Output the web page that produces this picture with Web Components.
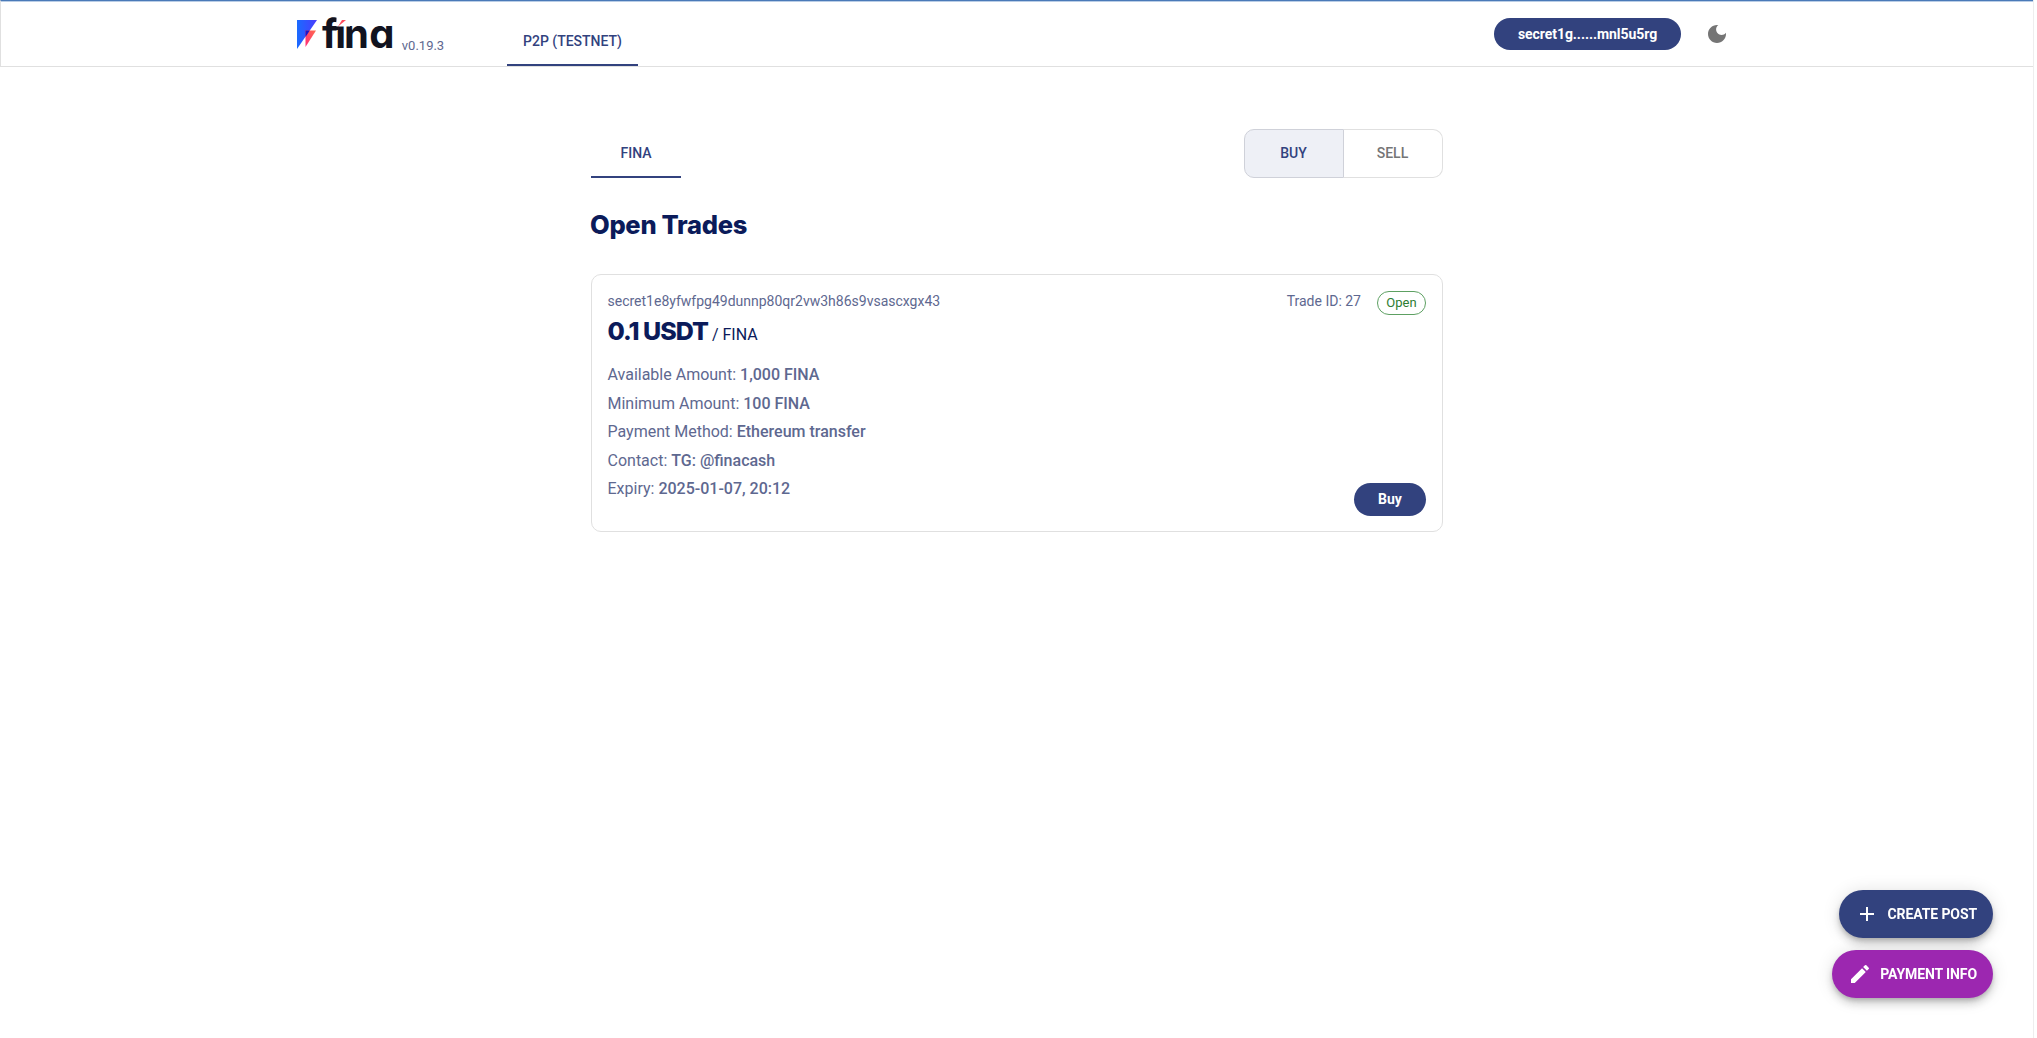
<!DOCTYPE html>
<html lang="en">
<head>
<meta charset="utf-8">
<title>fina P2P</title>
<style>
  html, body { margin: 0; padding: 0; background: #fff; height: 100%; }
  body { font-family: Roboto, "Liberation Sans", sans-serif; overflow: hidden; }
  #page { box-sizing: border-box; width: 2034px; height: 1038px; border-right: 1px solid #eeeeee; }
</style>
</head>
<body>
<div id="page">
  <fina-header version="v0.19.3" tab="P2P (TESTNET)" wallet="secret1g......mnl5u5rg"></fina-header>
  <trade-page>
    <trade-card
      owner="secret1e8yfwfpg49dunnp80qr2vw3h86s9vsascxgx43"
      trade-id="27"
      price="0.1 USDT"
      token="FINA"
      available="1,000 FINA"
      minimum="100 FINA"
      method="Ethereum transfer"
      contact="TG: @finacash"
      expiry="2025-01-07, 20:12"></trade-card>
  </trade-page>
</div>
<fab-stack></fab-stack>

<script>
class FinaHeader extends HTMLElement {
  constructor() {
    super();
    this.attachShadow({ mode: "open" });
  }

  connectedCallback() {
    const version = this.getAttribute("version") || "";
    const tab = this.getAttribute("tab") || "";
    const wallet = this.getAttribute("wallet") || "";

    this.shadowRoot.innerHTML = `
      <style>
        :host {
          display: flex;
          align-items: stretch;
          box-sizing: border-box;
          height: 67px;
          padding: 1px 304px 0 296px;
          background: #fff;
          border-top: 1px solid #4a7ab8;
          border-left: 1px solid #e0e0e0;
          border-bottom: 1px solid #e0e0e0;
          box-shadow: inset 0 1px 0 #b9cde6;
        }
        .logo { display: flex; align-items: flex-start; width: 210px; }
        .logo > svg { margin-top: 18px; flex: none; }
        .word {
          position: relative;
          margin: 10px 0 0 5px;
          font: 700 40px/44px Inter, sans-serif;
          font-feature-settings: "cv11";
          letter-spacing: 0.4px;
          color: #11131f;
        }
        .word .f { letter-spacing: -2.6px; }
        .word .i { letter-spacing: -2.3px; }
        .accent { position: absolute; left: 14px; top: 3px; }
        .version { margin: 35px 0 0 7px; font-size: 13px; line-height: 18px; color: #5e6890; }
        .tab {
          display: flex;
          align-items: center;
          box-sizing: border-box;
          padding: 15px 16px 0;
          height: 64px;
          font-size: 14px;
          font-weight: 500;
          color: #32427e;
          border-bottom: 2px solid #32427e;
        }
        .spacer { flex: 1; }
        .wallet {
          align-self: flex-start;
          margin-top: 16px;
          box-sizing: border-box;
          width: 187px;
          height: 32px;
          border-radius: 16px;
          background: #32427e;
          color: #fff;
          font-size: 14px;
          font-weight: 700;
          letter-spacing: -0.05px;
          line-height: 32px;
          text-align: center;
        }
        .moon { align-self: flex-start; margin: 20px 0 0 24px; }
      </style>
      <div class="logo">
        <svg width="20" height="29" viewBox="0 0 20 29">
          <defs>
            <linearGradient id="blue" x1="0" y1="0" x2="1" y2="0">
              <stop offset="0" stop-color="#1a6bff"/><stop offset="1" stop-color="#4a3cff"/>
            </linearGradient>
            <linearGradient id="red" x1="0" y1="1" x2="1" y2="0">
              <stop offset="0" stop-color="#ff2d7a"/><stop offset="1" stop-color="#ff6a4d"/>
            </linearGradient>
          </defs>
          <path d="M0 0H20L0 29Z" fill="url(#blue)"/>
          <path d="M8.500 10.500H19L8.500 27Z" fill="url(#red)"/>
          <path d="M8.500 10.500H12.800L8.500 17Z" fill="#1a14c8"/>
        </svg>
        <span class="word"><span class="f">f</span><span class="i">i</span>na<svg class="accent" width="14" height="16" viewBox="0 0 14 16"><rect x="0.500" y="0" width="13.500" height="11.500" fill="#fff"/><rect x="0" y="11.500" width="2.500" height="3.500" fill="#11131f"/><path d="M6 5H10L2 11.500Z" fill="#ff4d5e"/></svg></span>
        <span class="version">${version}</span>
      </div>
      <div class="tab">${tab}</div>
      <div class="spacer"></div>
      <div class="wallet">${wallet}</div>
      <svg class="moon" width="24" height="24" viewBox="0 0 24 24" fill="#757575">
        <path d="M12 3c-4.970 0-9 4.030-9 9s4.030 9 9 9 9-4.030 9-9c0-.460-.040-.920-.100-1.360-.980 1.370-2.580 2.260-4.400 2.260-2.980 0-5.400-2.420-5.400-5.400 0-1.810.890-3.420 2.260-4.400-.440-.060-.900-.100-1.360-.100z"/>
      </svg>
    `;
  }
}

class TradePage extends HTMLElement {
  constructor() {
    super();
    this.attachShadow({ mode: "open" });
  }

  connectedCallback() {
    this.shadowRoot.innerHTML = `
      <style>
        :host { display: block; box-sizing: border-box; width: 852px; margin: 62px 0 0 591px; }
        .top { display: flex; justify-content: space-between; align-items: flex-end; height: 49px; }
        .tab {
          box-sizing: border-box;
          width: 90px;
          height: 48px;
          padding-top: 13px;
          text-align: center;
          font: 500 14px/20px Roboto, sans-serif;
          color: #32427e;
          border-bottom: 2px solid #32427e;
        }
        .toggle {
          display: flex;
          box-sizing: border-box;
          width: 199px;
          height: 49px;
          font: 500 14px/47px Roboto, sans-serif;
          text-align: center;
        }
        .toggle div { box-sizing: border-box; border: 1px solid #e0e0e0; }
        .buy { width: 100px; padding-right: 1px; background: #eef0f6; color: #32427e; border-color: #cfd1d9 !important; border-radius: 10px 0 0 10px; }
        .sell { flex: 1; padding-right: 1px; color: #757575; border-left: 0 !important; border-radius: 0 10px 10px 0; }
        h2 {
          margin: 30px 0 32px -1px;
          font: 800 25.500px/34px Inter, sans-serif;
          letter-spacing: -0.3px;
          color: #0b1b5a;
        }
      </style>
      <div class="top">
        <div class="tab">FINA</div>
        <div class="toggle"><div class="buy">BUY</div><div class="sell">SELL</div></div>
      </div>
      <h2>Open Trades</h2>
      <slot></slot>
    `;
  }
}

class TradeCard extends HTMLElement {
  constructor() {
    super();
    this.attachShadow({ mode: "open" });
  }

  connectedCallback() {
    const attr = (name) => this.getAttribute(name) || "";
    const rows = [
      ["Available Amount", attr("available")],
      ["Minimum Amount", attr("minimum")],
      ["Payment Method", attr("method")],
      ["Contact", attr("contact")],
      ["Expiry", attr("expiry")],
    ];

    this.shadowRoot.innerHTML = `
      <style>
        :host {
          display: block;
          position: relative;
          box-sizing: border-box;
          height: 258px;
          padding: 16px 16px 16px 15.500px;
          border: 1px solid #e0e0e0;
          border-radius: 10px;
          font-family: Roboto, sans-serif;
          color: #5e6890;
        }
        .head { display: flex; justify-content: space-between; font-size: 14px; line-height: 20px; }
        .right { display: flex; align-items: flex-start; }
        .chip {
          box-sizing: border-box;
          margin-left: 16px;
          width: 49px;
          height: 24px;
          border: 1px solid #5da062;
          border-radius: 12px;
          font-size: 13px;
          line-height: 22px;
          text-align: center;
          color: #2e7d32;
        }
        .price { margin-top: -2px; height: 36px; line-height: 36px; color: #0b1b5a; font-size: 16px; }
        .price b { font: 800 25px/36px Inter, sans-serif; letter-spacing: -1px; }
        .rows { margin-top: 12px; }
        .row { font-size: 16px; line-height: 28.500px; }
        .row b { font-weight: 500; }
        .actions { display: flex; justify-content: flex-end; margin-top: -21px; }
        .buy {
          box-sizing: border-box;
          width: 72px;
          height: 33px;
          border-radius: 17px;
          background: #32427e;
          color: #fff;
          font-size: 14px;
          font-weight: 700;
          line-height: 33px;
          text-align: center;
        }
      </style>
      <div class="head">
        <span>${attr("owner")}</span>
        <span class="right">Trade ID: ${attr("trade-id")}<span class="chip">Open</span></span>
      </div>
      <div class="price"><b>${attr("price")}</b> / ${attr("token")}</div>
      <div class="rows">
        ${rows.map(([k, v]) => `<div class="row">${k}: <b>${v}</b></div>`).join("")}
      </div>
      <div class="actions"><div class="buy">Buy</div></div>
    `;
  }
}

class FabStack extends HTMLElement {
  constructor() {
    super();
    this.attachShadow({ mode: "open" });
  }

  connectedCallback() {
    this.shadowRoot.innerHTML = `
      <style>
        :host {
          position: fixed;
          right: 44px;
          bottom: 40px;
          display: flex;
          flex-direction: column;
          align-items: flex-end;
          gap: 12px;
        }
        .fab {
          display: flex;
          align-items: center;
          box-sizing: border-box;
          height: 48px;
          border-radius: 24px;
          padding: 0 16px;
          color: #fff;
          font: 700 14px/20px Roboto, sans-serif;
          letter-spacing: -0.1px;
          box-shadow: 0 3px 5px -1px rgba(0,0,0,.2), 0 6px 10px 0 rgba(0,0,0,.14), 0 1px 18px 0 rgba(0,0,0,.12);
        }
        .fab svg { flex: none; margin-right: 8px; }
        .create svg { margin-right: 9px; }
        .create { background: #32427e; }
        .info { background: #9c27b0; }
      </style>
      <div class="fab create">
        <svg width="24" height="24" viewBox="0 0 24 24" fill="#fff"><path d="M19 13h-6v6h-2v-6H5v-2h6V5h2v6h6v2z"/></svg>
        CREATE POST
      </div>
      <div class="fab info">
        <svg width="24" height="24" viewBox="0 0 24 24" fill="#fff"><path d="M3 17.250V21h3.750L17.810 9.940l-3.750-3.750L3 17.250zM20.710 7.040a1 1 0 0 0 0-1.410l-2.340-2.340a1 1 0 0 0-1.410 0l-1.830 1.830 3.750 3.750 1.830-1.830z"/></svg>
        PAYMENT INFO
      </div>
    `;
  }
}

customElements.define("fina-header", FinaHeader);
customElements.define("trade-page", TradePage);
customElements.define("trade-card", TradeCard);
customElements.define("fab-stack", FabStack);
</script>
</body>
</html>
